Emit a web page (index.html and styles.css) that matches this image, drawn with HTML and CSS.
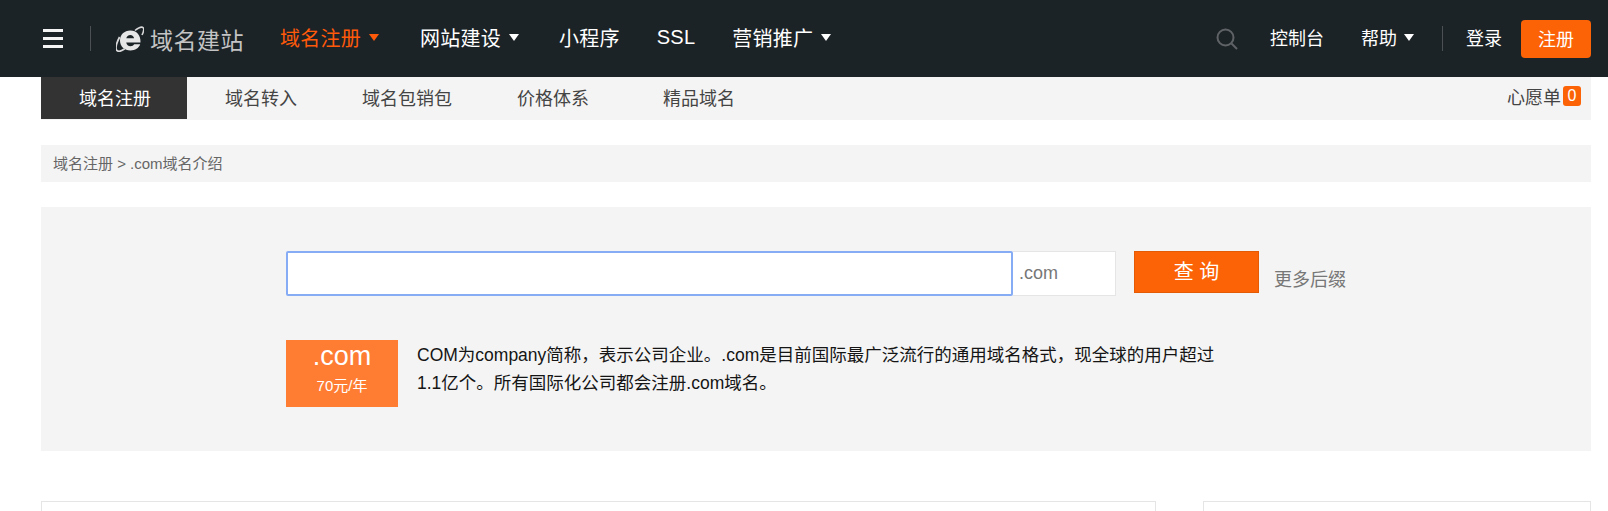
FILE: index.html
```html
<!DOCTYPE html>
<html lang="zh-CN">
<head>
<meta charset="utf-8">
<title>域名注册</title>
<link rel="stylesheet" href="styles.css">
</head>
<body>
<header class="topbar">
  <div class="burger"><span></span><span></span><span></span></div>
  <i class="vline vline-left"></i>
  <a class="logo">
    <svg class="logo-e" viewBox="0 0 28 26" width="28" height="26" aria-hidden="true">
      <path fill="#e6e6e6" fill-rule="evenodd" d="M24.500 16.500H10.200c.4 2.400 2 3.700 4.300 3.700 1.700 0 3-.7 3.700-1.900h6c-1.400 3.900-5 6.200-9.700 6.200-6.200 0-10.500-4.200-10.500-10 0-5.700 4.300-10 10.300-10 6.300 0 10.500 4.500 10.200 12zM10.300 12.300h7.800c-.3-2.100-1.800-3.400-3.800-3.400-2.100 0-3.600 1.300-4 3.400z"/>
      <path fill="none" stroke="#d8d8d8" stroke-width="1.600" d="M19 4.500C22.500 1.700 26 .5 27.200 1.800 28.300 3 27.500 6 26 9"/>
      <path fill="none" stroke="#d8d8d8" stroke-width="1.800" d="M3.600 11C.5 17-.8 22.500.8 24.400c1.500 1.500 5 .5 8-1.600"/>
    </svg>
    <span class="logo-text">域名建站</span>
  </a>
  <nav class="mainnav">
    <a class="nav-item nav-active">域名注册<i class="caret caret-orange"></i></a>
    <a class="nav-item">网站建设<i class="caret"></i></a>
    <a class="nav-item">小程序</a>
    <a class="nav-item">SSL</a>
    <a class="nav-item">营销推广<i class="caret"></i></a>
  </nav>
  <div class="rightnav">
    <svg class="search-icon" viewBox="0 0 22 22" width="22" height="22" aria-hidden="true">
      <circle cx="9.500" cy="9.500" r="8" fill="none" stroke="#5f6366" stroke-width="2"/>
      <path d="M15.500 15.500 21 21" stroke="#5f6366" stroke-width="2" fill="none"/>
    </svg>
    <a class="right-item item-console">控制台</a>
    <a class="right-item item-help">帮助<i class="caret caret-small"></i></a>
    <i class="vline vline-right"></i>
    <a class="right-item item-login">登录</a>
    <a class="signup">注册</a>
  </div>
</header>

<main class="page">
  <div class="subnav">
    <a class="tab tab-active">域名注册</a>
    <a class="tab">域名转入</a>
    <a class="tab">域名包销包</a>
    <a class="tab">价格体系</a>
    <a class="tab">精品域名</a>
    <a class="wishlist">心愿单<b class="count">0</b></a>
  </div>

  <div class="crumbs">域名注册 &gt; .com域名介绍</div>

  <section class="panel">
    <div class="search-row">
      <div class="search-input"></div>
      <div class="suffix">.com</div>
      <a class="search-btn">查 询</a>
      <a class="more">更多后缀</a>
    </div>
    <div class="intro">
      <div class="badge">
        <div class="badge-name">.com</div>
        <div class="badge-price">70元/年</div>
      </div>
      <p class="intro-text">COM为company简称，表示公司企业。.com是目前国际最广泛流行的通用域名格式，现全球的用户超过1.1亿个。所有国际化公司都会注册.com域名。</p>
    </div>
  </section>

  <div class="cards">
    <div class="card card-main"></div>
    <div class="card card-side"></div>
  </div>
</main>
</body>
</html>
```
FILE: styles.css
```css
* { box-sizing: border-box; }
html, body { margin: 0; padding: 0; overflow: hidden; background: #fff; }
body { font-family: "Liberation Sans", "Noto Sans CJK SC", sans-serif; color: #222; }
a { color: inherit; text-decoration: none; }
i { font-style: normal; }

.topbar { height: 77px; background: #1c2327; color: #fff; display: flex; align-items: center; padding: 0 17px 0 43px; }
.burger { width: 20px; height: 19px; display: flex; flex-direction: column; justify-content: space-between; }
.burger span { display: block; height: 3px; background: #f4f4f4; }
.vline { display: block; width: 1px; height: 25px; background: #4a5053; }
.vline-left { margin-left: 27px; }
.logo { display: flex; align-items: center; margin-left: 25px; }
.logo-e { display: block; }
.logo-text { font-size: 23px; color: #c4c4c4; margin-left: 6px; letter-spacing: 0.5px; }
.mainnav { display: flex; align-items: center; margin-left: 36px; font-size: 20px; letter-spacing: 0.25px; }
.nav-item { display: flex; align-items: center; margin-right: 37px; padding-bottom: 2px; white-space: nowrap; }
.nav-active { color: #ff5a0a; margin-right: 38px; }
.caret { display: block; width: 0; height: 0; margin: 0 -3px 0 8px; border-left: 5.500px solid transparent; border-right: 5.500px solid transparent; border-top: 7px solid #fff; }
.nav-item .caret { margin-right: 3px; }
.caret-orange { border-top-color: #ff5a0a; }
.rightnav { margin-left: auto; display: flex; align-items: center; font-size: 18px; }
.search-icon { display: block; margin-right: 32px; }
.right-item { display: flex; align-items: center; padding-bottom: 3px; white-space: nowrap; }
.item-console { margin-right: 37px; }
.rightnav .caret-small { margin: 0 0 0 7px; }
.vline-right { margin: 0 23px 0 28px; }
.item-login { margin-right: 19px; }
.signup { width: 70px; height: 38px; padding-bottom: 1px; background: #fb6306; border-radius: 4px; display: flex; align-items: center; justify-content: center; font-size: 18px; }

.page { margin: 0 17px 0 41px; }
.subnav { height: 43px; background: #f4f4f4; display: flex; align-items: flex-start; font-size: 18px; color: #444; }
.tab { width: 146px; height: 42px; display: flex; align-items: center; justify-content: center; padding: 0 0 3px 2px; white-space: nowrap; }
.tab-active { background: #333; color: #fff; }
.wishlist { margin-left: auto; margin-right: 10px; height: 38px; display: flex; align-items: center; }
.count { display: block; width: 18px; height: 20px; line-height: 20px; margin-left: 2px; text-align: center; background: #fb6306; color: #fff; border-radius: 3px; font-weight: normal; font-size: 16px; }

.crumbs { margin-top: 25px; height: 37px; line-height: 38px; background: #f4f4f4; padding-left: 12px; font-size: 15px; color: #666; }

.panel { margin-top: 25px; height: 244px; background: #f4f4f4; padding: 44px 0 0 245px; }
.search-row { display: flex; align-items: flex-start; }
.search-input { width: 727px; height: 45px; background: #fff; border: 2px solid #86acf5; border-radius: 2px; }
.suffix { width: 103px; height: 45px; background: #fff; border: 1px solid #e5e5e5; border-left: 0; line-height: 43px; padding-left: 6px; font-size: 18px; color: #777; }
.search-btn { width: 125px; height: 42px; margin-left: 18px; background: #fb6306; border: 1px solid #e55a05; color: #fff; text-align: center; line-height: 40px; font-size: 20px; }
.more { margin: 17px 0 0 15px; font-size: 18px; line-height: 24px; color: #777; }
.intro { display: flex; margin-top: 44px; }
.badge { width: 112px; height: 67px; background: #ff7c33; color: #fff; text-align: center; padding-top: 1px; }
.badge-name { font-size: 27px; line-height: 30px; }
.badge-price { font-size: 15px; line-height: 22px; margin-top: 4px; }
.intro-text { margin: 0 0 0 19px; padding-top: 1px; width: 800px; font-size: 17.500px; line-height: 28px; color: #151515; }

.cards { margin-top: 50px; display: flex; justify-content: space-between; }
.card { height: 200px; background: #fff; border: 1px solid #e5e5e5; }
.card-main { width: 1115px; }
.card-side { width: 388px; }
```
